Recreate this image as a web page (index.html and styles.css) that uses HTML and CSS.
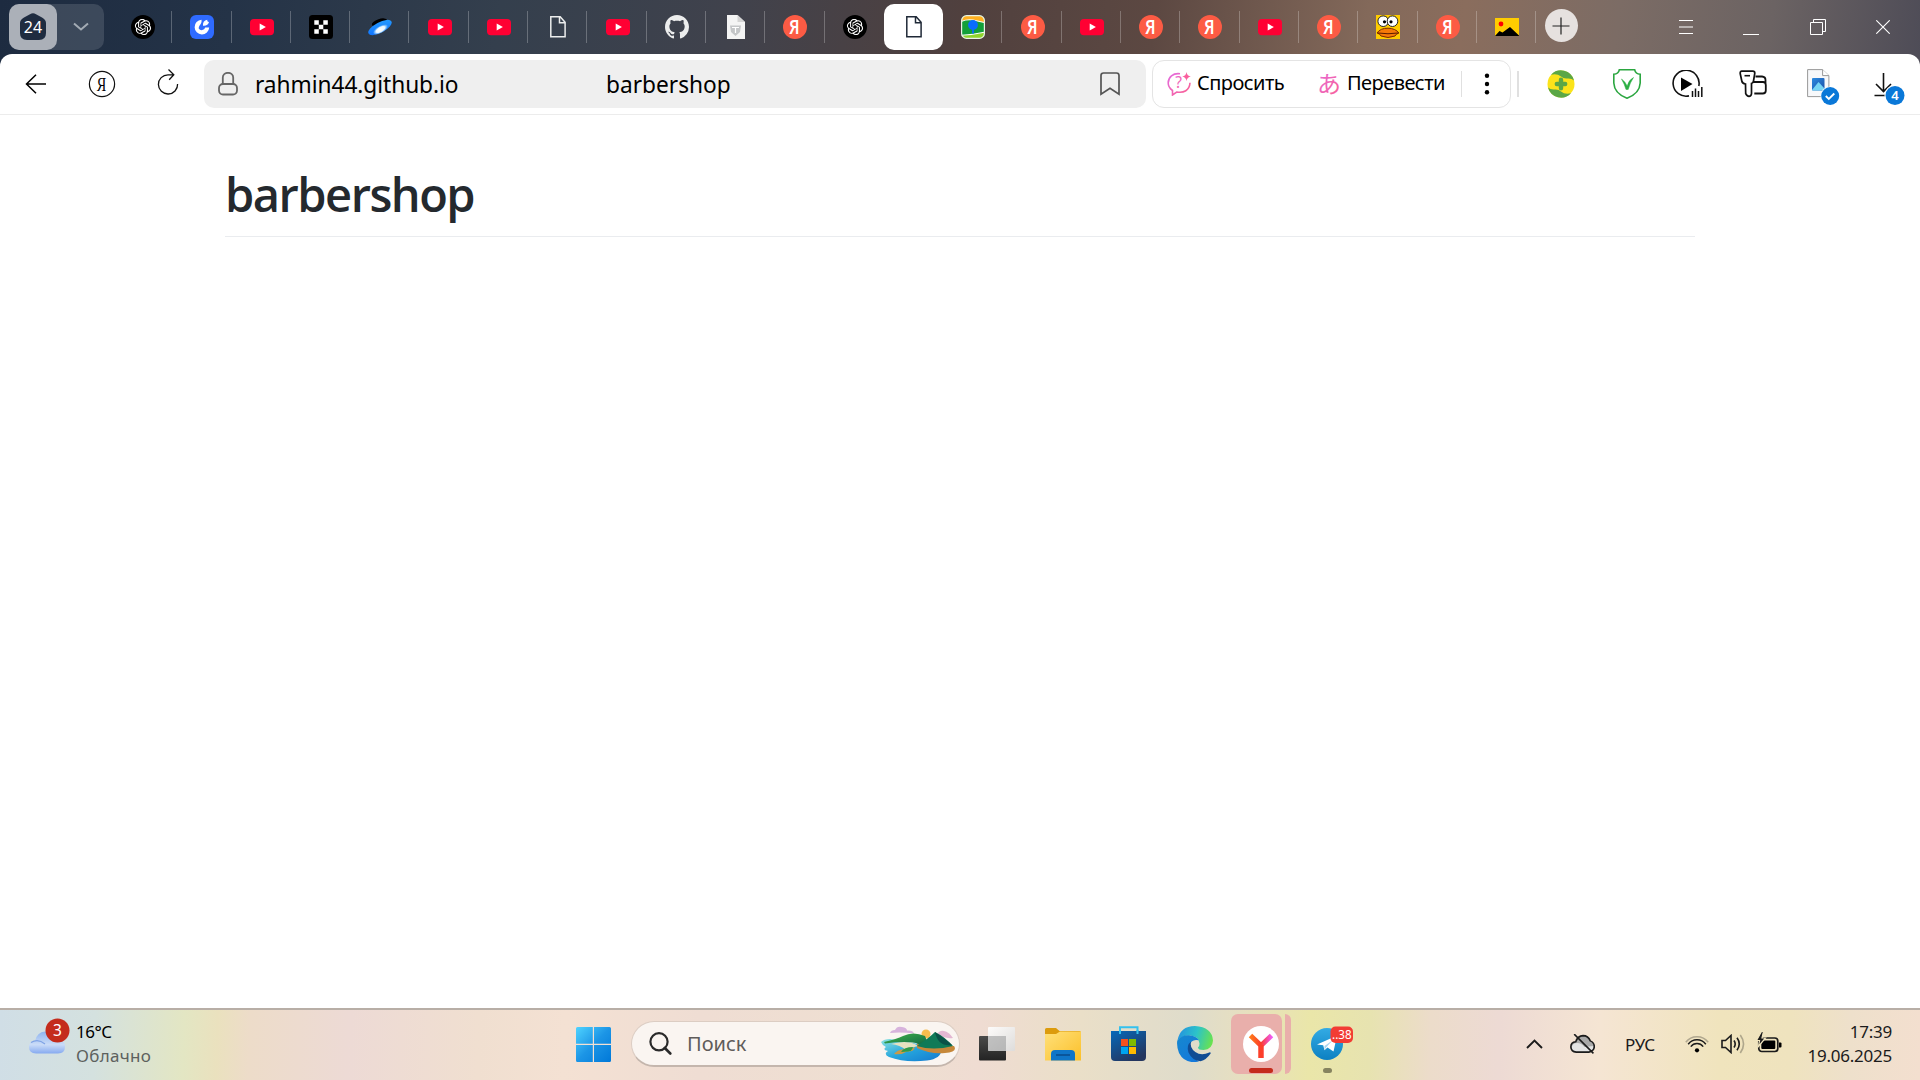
FILE: index.html
```html
<!DOCTYPE html>
<html lang="ru">
<head>
<meta charset="utf-8">
<title>barbershop</title>
<link rel="stylesheet" href="styles.css">
</head>
<body>
<svg class="defs" aria-hidden="true">
  <defs>
    <linearGradient id="pink" x1="0" y1="0" x2="1" y2="1"><stop offset="0" stop-color="#e36be0"/><stop offset="1" stop-color="#fb5f8f"/></linearGradient>
    <linearGradient id="saucer" x1="0" y1="1" x2="1" y2="0"><stop offset="0" stop-color="#0a6cff"/><stop offset="1" stop-color="#2aa2ff"/></linearGradient>
    <radialGradient id="glow"><stop offset="0" stop-color="#fff"/><stop offset=".6" stop-color="#e8f6ff"/><stop offset="1" stop-color="#7cc4ff" stop-opacity=".2"/></radialGradient>
    <linearGradient id="cloud" x1="0" y1="0" x2="0" y2="1"><stop offset="0" stop-color="#8fb4ee"/><stop offset=".6" stop-color="#cadcf8"/><stop offset="1" stop-color="#86aaf0"/></linearGradient>
    <linearGradient id="win" gradientUnits="userSpaceOnUse" x1="0" y1="0" x2="35" y2="35"><stop offset="0" stop-color="#4fd3ff"/><stop offset=".5" stop-color="#1c95e6"/><stop offset="1" stop-color="#0078d8"/></linearGradient>
    <linearGradient id="folder" x1="0" y1="0" x2="1" y2="1"><stop offset="0" stop-color="#ffe07a"/><stop offset="1" stop-color="#fbc02a"/></linearGradient>
    <linearGradient id="store" x1="0" y1="0" x2=".6" y2="1"><stop offset="0" stop-color="#0669ba"/><stop offset="1" stop-color="#24365f"/></linearGradient>
    <linearGradient id="edge-top" x1="0" y1=".4" x2="1" y2=".6"><stop offset="0" stop-color="#2493df"/><stop offset=".5" stop-color="#2cc3c9"/><stop offset="1" stop-color="#6be34c"/></linearGradient>
    <linearGradient id="edge-side" x1="0" y1="0" x2=".7" y2="1"><stop offset="0" stop-color="#1688cf"/><stop offset="1" stop-color="#1479db"/></linearGradient>
    <linearGradient id="ybranch" x1="0" y1="0" x2="1" y2="0"><stop offset="0" stop-color="#ff7a1a"/><stop offset=".5" stop-color="#fb3b2c"/><stop offset="1" stop-color="#f05af0"/></linearGradient>
    <linearGradient id="tg" x1="0" y1="0" x2="0" y2="1"><stop offset="0" stop-color="#33abe4"/><stop offset="1" stop-color="#0d80c2"/></linearGradient>
    <linearGradient id="pane" x1="0" y1="0" x2="1" y2="1"><stop offset="0" stop-color="#fff"/><stop offset="1" stop-color="#dcdcdc"/></linearGradient>
    <linearGradient id="dark" x1="0" y1="0" x2="0" y2="1"><stop offset="0" stop-color="#4b4b4a"/><stop offset="1" stop-color="#232323"/></linearGradient>
    <linearGradient id="sea" x1="0" y1="0" x2="1" y2="1"><stop offset="0" stop-color="#8fe3e0"/><stop offset=".5" stop-color="#25a5dd"/><stop offset="1" stop-color="#1479cf"/></linearGradient>
    <linearGradient id="hill" x1="0" y1="0" x2="1" y2="1"><stop offset="0" stop-color="#43b649"/><stop offset="1" stop-color="#0d6246"/></linearGradient>
    <linearGradient id="photo" x1="0" y1="0" x2="1" y2="1"><stop offset="0" stop-color="#2c8be0"/><stop offset="1" stop-color="#1b4fa8"/></linearGradient>
  </defs>
  <symbol id="i-gpt" viewBox="0 0 24 24"><circle cx="12" cy="12" r="12"/><path transform="translate(3.9 3.9) scale(.675)" fill="#fff" d="M22.2819 9.8211a5.9847 5.9847 0 0 0-.5157-4.9108 6.0462 6.0462 0 0 0-6.5098-2.9A6.0651 6.0651 0 0 0 4.9807 4.1818a5.9847 5.9847 0 0 0-3.9977 2.9 6.0462 6.0462 0 0 0 .7427 7.0966 5.98 5.98 0 0 0 .511 4.9107 6.051 6.051 0 0 0 6.5146 2.9001A5.9847 5.9847 0 0 0 13.2599 24a6.0557 6.0557 0 0 0 5.7718-4.2058 5.9894 5.9894 0 0 0 3.9977-2.9001 6.0557 6.0557 0 0 0-.7475-7.0729zm-9.022 12.6081a4.4755 4.4755 0 0 1-2.8764-1.0408l.1419-.0804 4.7783-2.7582a.7948.7948 0 0 0 .3927-.6813v-6.7369l2.02 1.1686a.071.071 0 0 1 .038.052v5.5826a4.504 4.504 0 0 1-4.4945 4.4944zm-9.6607-4.1254a4.4708 4.4708 0 0 1-.5346-3.0137l.142.0852 4.783 2.7582a.7712.7712 0 0 0 .7806 0l5.8428-3.3685v2.3324a.0804.0804 0 0 1-.0332.0615L9.74 19.9502a4.4992 4.4992 0 0 1-6.1408-1.6464zM2.3408 7.8956a4.485 4.485 0 0 1 2.3655-1.9728V11.6a.7664.7664 0 0 0 .3879.6765l5.8144 3.3543-2.0201 1.1685a.0757.0757 0 0 1-.071 0l-4.8303-2.7865A4.504 4.504 0 0 1 2.3408 7.872zm16.5963 3.8558L13.1038 8.364 15.1192 7.2a.0757.0757 0 0 1 .071 0l4.8303 2.7913a4.4944 4.4944 0 0 1-.6765 8.1042v-5.6772a.79.79 0 0 0-.407-.667zm2.0107-3.0231l-.142-.0852-4.7735-2.7818a.7759.7759 0 0 0-.7854 0L9.409 9.2297V6.8974a.0662.0662 0 0 1 .0284-.0615l4.8303-2.7866a4.4992 4.4992 0 0 1 6.6802 4.66zM8.3065 12.863l-2.02-1.1638a.0804.0804 0 0 1-.038-.0567V6.0742a4.4992 4.4992 0 0 1 7.3757-3.4537l-.142.0805L8.704 5.459a.7948.7948 0 0 0-.3927.6813zm1.0976-2.3654l2.602-1.4998 2.6069 1.4998v2.9994l-2.5974 1.4997-2.6067-1.4997Z"/></symbol>
  <symbol id="i-yt" viewBox="0 0 24 24"><rect y="4" width="24" height="16.2" rx="4" fill="#ff0033"/><path d="M9.7 8.6l6.2 3.5-6.2 3.5z" fill="#fff"/></symbol>
  <symbol id="i-ya" viewBox="0 0 24 24"><circle cx="12" cy="12" r="12" fill="#fc5b44"/><text x="11.2" y="18.6" text-anchor="middle" font-family="Noto Sans, sans-serif" font-weight="600" font-size="19" fill="#fff" textLength="10.6" lengthAdjust="spacingAndGlyphs">Я</text></symbol>
  <symbol id="i-doc" viewBox="0 0 24 24"><path d="M4.8 1.8h9.4l4.9 5.4v14.5H4.8zM13.5 1.8v5.9h5.6" fill="none" stroke="currentColor" stroke-width="1.5"/></symbol>
</svg>

<header class="tabstrip">
  <div class="group">
    <div class="group-count"><svg width="26" height="28" viewBox="0 0 26 28"><path d="M10 1.2 Q13-.6 16 1.2L22 4.4Q26 6.5 26 10V20Q26 27 19 27H7Q0 27 0 20V10Q0 6.5 4 4.4Z" fill="#1f2c40"/><text x="13" y="20" text-anchor="middle" font-family="Noto Sans, sans-serif" font-size="16" fill="#fff">24</text></svg></div>
    <svg class="group-more" width="18" height="10" viewBox="0 0 18 10"><path d="M2 1.5l7 6 7-6" fill="none" stroke="#a3abb4" stroke-width="2"/></svg>
  </div>
  <nav class="tabs">
    <span class="tab"><svg><use href="#i-gpt"/></svg></span>
    <span class="tab"><svg viewBox="0 0 24 24"><rect width="24" height="24" rx="6" fill="#2f6bff"/><path d="M11.5 4.8A7.3 7.3 0 1 0 19.2 12.5L15.2 12.5A3.6 3.6 0 0 1 8.7 13.5C8.8 9.8 12.2 9.5 11.5 4.8Z" fill="#fff"/><path d="M13 10.8C12.6 7.8 14 5.4 17.3 4.8c-.2 1.4.2 1.9 1.7 2.2-.5 2.6-2.8 4.2-6 3.8z" fill="#fff"/></svg></span>
    <span class="tab"><svg><use href="#i-yt"/></svg></span>
    <span class="tab"><svg viewBox="0 0 24 24"><rect width="24" height="24" rx="3.5"/><path d="M5.3 5.3h4.5v4.5h4.5v-4.5h4.5v4.5h-4.5v4.5h4.5v4.5h-4.5v-4.5h-4.5v4.5h-4.5v-4.5h4.5v-4.5h-4.5z" fill="#fff"/></svg></span>
    <span class="tab"><svg viewBox="0 0 24 24"><ellipse cx="11.5" cy="7.5" rx="8" ry="3.5" transform="rotate(-18 11.5 7.5)"/><ellipse cx="12" cy="12.5" rx="13" ry="5.2" transform="rotate(-28 12 12.5)" fill="url(#saucer)"/><ellipse cx="12.5" cy="14.5" rx="8.2" ry="3.6" transform="rotate(-30 12.5 14.5)" fill="url(#glow)"/></svg></span>
    <span class="tab"><svg><use href="#i-yt"/></svg></span>
    <span class="tab"><svg><use href="#i-yt"/></svg></span>
    <span class="tab pale"><svg><use href="#i-doc"/></svg></span>
    <span class="tab"><svg><use href="#i-yt"/></svg></span>
    <span class="tab pale"><svg viewBox="0 0 16 16"><path fill="currentColor" d="M8 0C3.58 0 0 3.58 0 8c0 3.54 2.29 6.53 5.47 7.59.4.07.55-.17.55-.38 0-.19-.01-.82-.01-1.49-2.01.37-2.53-.49-2.69-.94-.09-.23-.48-.94-.82-1.13-.28-.15-.68-.52-.01-.53.63-.01 1.08.58 1.23.82.72 1.21 1.87.87 2.33.66.07-.52.28-.87.51-1.07-1.78-.2-3.64-.89-3.64-3.95 0-.87.31-1.59.82-2.15-.08-.2-.36-1.02.08-2.12 0 0 .67-.21 2.2.82.64-.18 1.32-.27 2-.27s1.36.09 2 .27c1.53-1.04 2.2-.82 2.2-.82.44 1.1.16 1.92.08 2.12.51.56.82 1.27.82 2.15 0 3.07-1.87 3.75-3.65 3.95.29.25.54.73.54 1.48 0 1.07-.01 1.93-.01 2.2 0 .21.15.46.55.38A8.01 8.01 0 0 0 16 8c0-4.42-3.58-8-8-8z"/></svg></span>
    <span class="tab"><svg viewBox="0 0 24 24"><path d="M3 0h10.5L21 7v17H3z" fill="#f4f4f4"/><path d="M13.5 0v7H21z" fill="#d4d4d4"/><path d="M6 10.500h11l-1 6.500-4.500 4L7 17z" fill="#c4c6c8"/><path d="M8 12.5h7M11.5 13v5" stroke="#fff" stroke-width="1.2"/></svg></span>
    <span class="tab"><svg><use href="#i-ya"/></svg></span>
    <span class="tab last"><svg><use href="#i-gpt"/></svg></span>
    <span class="tab active"><svg><use href="#i-doc"/></svg></span>
    <span class="tab"><svg viewBox="0 0 24 24"><rect x=".5" y=".5" width="23" height="23" rx="5" fill="#12a03a"/><path d="M.8 6V5Q1 .8 5.500 .8h13Q23.200 1 23.200 5v2.500L12 5Q6 4 .8 6z" fill="#ffb020"/><path d="M.8 20.500Q12 20 23.200 17.500v2Q23 23.200 19 23.200H5Q1.500 23 .8 20.500z" fill="#8fd32b"/><path d="M.8 6.200Q6 4 12 5l11.200 2.500M.8 20.300Q12 19.800 23.200 17.300" fill="none" stroke="#fff" stroke-width="1.100"/><circle cx="12" cy="10" r="4.900" fill="#0a6cff"/><path d="M12 14v4.500" stroke="#0a6cff" stroke-width="1.800"/><rect x=".6" y=".6" width="22.800" height="22.800" rx="5" fill="none" stroke="#e9f2e6" stroke-width="1.200"/></svg></span>
    <span class="tab"><svg><use href="#i-ya"/></svg></span>
    <span class="tab"><svg><use href="#i-yt"/></svg></span>
    <span class="tab"><svg><use href="#i-ya"/></svg></span>
    <span class="tab"><svg><use href="#i-ya"/></svg></span>
    <span class="tab"><svg><use href="#i-yt"/></svg></span>
    <span class="tab"><svg><use href="#i-ya"/></svg></span>
    <span class="tab"><svg viewBox="0 0 24 24"><rect width="24" height="24" fill="#fc0"/><g fill="#fff" stroke="#222" stroke-width="1"><circle cx="7.200" cy="6.200" r="5.300"/><circle cx="16.500" cy="6.200" r="5.300"/></g><circle cx="8.500" cy="6.800" r="1.600"/><circle cx="15" cy="6.800" r="1.600"/><path d="M1 18Q4.500 13 12 13.200T23 18q-3 .8-4 3-7 3-14 0-1-2.200-4-3z" fill="#f67a08" stroke="#7a2c00" stroke-width="1"/><path d="M2 18q10 1.500 20 0" stroke="#5a1c00" fill="none"/></svg></span>
    <span class="tab"><svg><use href="#i-ya"/></svg></span>
    <span class="tab"><svg viewBox="0 0 24 24"><path d="M0 3h24v18H0z" fill="#fc0"/><circle cx="6" cy="9" r="2.400" fill="#f00"/><path d="M0 21l4.500-5 3 1.500L15 12l9 8.500v.5z"/></svg></span>
  </nav>
  <button class="newtab"><svg width="18" height="18" viewBox="0 0 18 18"><path d="M9 .5v17M.5 9h17" stroke="#222" stroke-width="1.200"/></svg></button>
  <div class="window">
    <svg width="14" height="14" viewBox="0 0 14 14"><path d="M0 .5h14M0 7h14M0 13.500h14" stroke="#fff"/></svg>
    <svg width="16" height="16" viewBox="0 0 16 16"><path d="M0 15.500h16" stroke="#fff"/></svg>
    <svg width="16" height="16" viewBox="0 0 16 16"><path d="M.5 3.500h12v12H.5zM3.500 3.500v-3h12v12h-3" fill="none" stroke="#fff"/></svg>
    <svg width="14" height="14" viewBox="0 0 14 14"><path d="M.3 .3l13.400 13.400M13.700 .3L.3 13.700" stroke="#fff" stroke-width="1.100"/></svg>
  </div>
</header>

<div class="toolbar">
  <div class="nav">
    <svg width="22" height="20" viewBox="0 0 22 20"><path d="M11 .8L1.500 10l9.500 9.200M1.500 10H21" fill="none" stroke="#000" stroke-width="1.500"/></svg>
    <svg width="28" height="28" viewBox="0 0 28 28"><circle cx="14" cy="14" r="12.600" fill="none" stroke="#111" stroke-width="1.200"/><text x="13.500" y="20.500" text-anchor="middle" font-family="Liberation Serif, serif" font-size="19.500" textLength="9.500" lengthAdjust="spacingAndGlyphs">Я</text></svg>
    <svg width="24" height="28" viewBox="0 0 24 28"><path d="M17.500 6.800H12A9.600 9.600 0 1 0 21.600 16M12.500 1.500l5.300 5.300-4.600 5" fill="none" stroke="#111" stroke-width="1.300"/></svg>
  </div>
  <div class="address">
    <svg width="20" height="24" viewBox="0 0 20 24"><rect x="1" y="12" width="18" height="10.500" rx="4" fill="none" stroke="#666" stroke-width="1.800"/><path d="M4.800 12V5.600a5.200 4.800 0 0 1 10.400 0V12" fill="none" stroke="#666" stroke-width="1.800"/></svg>
    <span class="host">rahmin44.github.io</span>
    <span class="title">barbershop</span>
    <svg width="20" height="24" viewBox="0 0 20 24"><path d="M1 22.200V3.500Q1 1 3.500 1h13Q19 1 19 3.500v18.700l-9-6z" fill="none" stroke="#555" stroke-width="1.700"/></svg>
  </div>
  <div class="assist">
    <svg width="24" height="24" viewBox="0 0 24 24"><path d="M13 1.800C6 .8 1.200 5.500 1.200 11c0 3.300 1.500 5.500 4.300 7.500V23l4.200-3c7 1.300 12.800-1.500 13.300-9.200" fill="none" stroke="url(#pink)" stroke-width="1.600"/><path d="M19.500 0q.6 4 4.300 4.500-3.700.6-4.300 4.500-.6-4-4.300-4.500Q19 4 19.500 0z" fill="#fa5f9e"/><text x="11.500" y="16.300" text-anchor="middle" font-family="Noto Sans, sans-serif" font-size="15.500" fill="url(#pink)">?</text></svg>
    <span class="ask">Спросить</span>
    <svg class="kana" width="22" height="24" viewBox="0 0 22 24"><text x="-1" y="20.500" font-family="Noto Sans CJK JP, sans-serif" font-size="24" fill="url(#pink)">あ</text></svg>
    <span class="translate">Перевести</span>
    <i class="line"></i>
    <svg class="dots" width="6" height="22" viewBox="0 0 6 22"><circle cx="3" cy="2.800" r="2.200"/><circle cx="3" cy="11" r="2.200"/><circle cx="3" cy="19.200" r="2.200"/></svg>
  </div>
  <i class="line outer"></i>
  <div class="extensions">
    <svg width="28" height="28" viewBox="0 0 28 28"><circle cx="14" cy="14" r="13.500" fill="#fbe31a"/><path d="M4 4.800A13.500 13.500 0 0 1 27 10.500Q24.500 8 20 8.500 16.500 8.800 14 6.500 10 3.300 4 4.800zM24 23.200A13.500 13.500 0 0 1 1 17.500Q3.500 20 8 19.500 11.500 19.200 14 21.500q4 3.200 10 1.700z" fill="#5ba746"/><path d="M14 9.800v8.400M9.800 14h8.400" stroke="#5ba746" stroke-width="4.400" stroke-linecap="round"/></svg>
    <svg width="28" height="30" viewBox="0 0 28 30"><path d="M6.300 .8h15.400Q22.500 4.800 27.200 5.200V14q-.5 10.500-13.200 15.200Q1.300 24.500.8 14V5.200Q5.500 4.800 6.300.8z" fill="none" stroke="#2ba640" stroke-width="1.600"/><path d="M8.500 10q3.800 2.500 5.700 7 1.500-6.200 6.300-8.500-3.500 5-5.300 12h-2.200Q11.500 15 8.500 10z" fill="#2bae43" stroke="#2bae43" stroke-width=".5"/></svg>
    <svg width="32" height="28" viewBox="0 0 32 28"><path d="M18 25.900A13 13 0 1 1 27.800 16" fill="none" stroke="#111" stroke-width="1.600"/><path d="M10 7.500l11.500 6.500L10 21z"/><path d="M21.500 27v-6M24.500 27V18.500M27.500 27v-6M30.800 27V17" stroke="#111" stroke-width="1.500"/></svg>
    <svg width="28" height="28" viewBox="0 0 28 28"><path d="M12.500 12H24q2.800 0 2.800 3v5.500q0 3-3 3h-8.500M16.500 6.500H23q3.500.3 3.500 3.500v4" fill="none" stroke="#111" stroke-width="1.800"/><path d="M2.800 1.200h11q2 0 2 2L14.500 11q-.3 2-2 2.500v10.200q-.3 2.600-2.500 2.600t-3.300-2.600L6.500 14Q3.300 13.500 2.800 11L1.200 3.500Q1 1.200 2.800 1.200z" fill="#fff" stroke="#111" stroke-width="1.700"/><path d="M5.500 5.700h5.500" stroke="#111" stroke-width="1.600"/></svg>
    <svg width="33" height="36" viewBox="0 0 33 36"><path d="M.6 .6h15l6.300 6v21H.6z" fill="#f7f8fa" stroke="#999" stroke-width="1"/><path d="M15.600 .6v6h6.300" fill="#fff" stroke="#999" stroke-width="1"/><rect x="5" y="9" width="12.500" height="12.500" rx="1" fill="url(#photo)"/><path d="M5 21l6.500-8 6 6.500v2H5z" fill="#76d5f5"/><circle cx="23.200" cy="27" r="9.600" fill="#fff"/><circle cx="23.200" cy="27" r="9" fill="#0a78d8"/><path d="M18.800 27l3 3 5.500-5.500" fill="none" stroke="#fff" stroke-width="1.900"/></svg>
    <svg width="32" height="34" viewBox="0 0 32 34"><path d="M9.500 1v18M2 12l7.500 7.500L17 12M.5 23.500H13" fill="none" stroke="#111" stroke-width="1.600"/><circle cx="21" cy="23.500" r="10.500" fill="#fff"/><circle cx="21" cy="23.500" r="9.500" fill="#0a78d8"/><text x="21" y="28.300" text-anchor="middle" font-family="Noto Sans, sans-serif" font-size="13" font-weight="600" fill="#fff">4</text></svg>
  </div>
</div>

<main class="page">
  <h1>barbershop</h1>
</main>

<footer class="taskbar">
  <div class="weather">
    <svg width="42" height="38" viewBox="0 0 42 38"><path d="M7 35.500q-7-.5-7-6.500 0-5.500 6-6Q8 14 16 13.500q8.500-.5 11.500 8.500 8.500-.5 8.500 6.500t-7 7z" fill="url(#cloud)"/><path d="M2 24.500q7-4.500 14 1.500" fill="none" stroke="#7fa3e6" stroke-width="1.200"/><circle cx="28.500" cy="12.500" r="12" fill="#c42b1c"/><text x="28.500" y="18" text-anchor="middle" font-family="Noto Sans, sans-serif" font-size="15.500" fill="#fff">3</text></svg>
    <div class="lines"><span class="temp">16°C</span><span class="sky">Облачно</span></div>
  </div>
  <svg class="start" width="35" height="35" viewBox="0 0 35 35"><path d="M0 1.500Q0 0 1.500 0H16.800v16.800H0zM18 0h15.500Q35 0 35 1.500V16.800H18zM0 18h16.800v17H1.500Q0 35 0 33.500zM18 18h17v15.500Q35 35 33.500 35H18z" fill="url(#win)"/></svg>
  <div class="search">
    <svg width="23" height="23" viewBox="0 0 23 23"><circle cx="10" cy="9.800" r="8.600" fill="none" stroke="#2a2a2a" stroke-width="2.200"/><path d="M15.800 16l5.500 5.500" stroke="#2a2a2a" stroke-width="2.600" stroke-linecap="round"/></svg>
    <span>Поиск</span>
    <svg width="74" height="36" viewBox="0 0 74 36"><circle cx="45" cy="8" r="4.500" fill="#f8bd4e"/><path d="M9 7q1-3 5-3 2-4.500 7-3 5 .5 5 3.500 6-.5 7 3Q20 6 9 7z" fill="#d7b3dc"/><path d="M56 9q2-5 7-4 5 1 9 7-8 1-16-3z" fill="#e3b7d2"/><path d="M0 16Q3 13 9 13L60 22Q62 32 46 34.500 24 37 8 31 2 28 7 25 1 24 5 21 1 19 0 16z" fill="url(#sea)"/><path d="M10 18q18-5 27 2-8 2-12 4-6-5-15-6z" fill="#e6e1c0"/><path d="M36 18l37 2q4 6-9 7-14 1.500-28-5z" fill="#c6883a"/><path d="M13 28q3-4 10-5 8 0 11-2-1 5-8 4.500-5 3.500-13 2.500z" fill="#c99a48"/><path d="M20 26q3-5 12-5-1 4-5 4.500z" fill="#2f9a48"/><path d="M3 16Q16 13 22 10q10-5 22 0l4 10q-9 0-13-3-12-2-31 .5z" fill="url(#hill)"/><path d="M36 20Q48 12 54 6q10 5 18 14-20 5-36 0z" fill="#0f7a57"/><path d="M54 6q8 5 17 13-14 2-17-13z" fill="#0a5147"/></svg>
  </div>
  <div class="apps">
    <svg width="36" height="36" viewBox="0 0 36 36"><rect y="10" width="27" height="24.500" rx="1" fill="url(#dark)"/><rect x="9" y="1" width="27" height="24" rx="1" fill="url(#pane)" fill-opacity=".9"/><path d="M9 10h18v15H9z" fill="#a2a2a2" fill-opacity=".55"/></svg>
    <svg width="36" height="36" viewBox="0 0 36 36"><path d="M0 10V3.500Q0 2 1.500 2H11l3.500 3H34.500Q36 5 36 6.500V12H0z" fill="#dc9b0d"/><path d="M0 8h11l4-2.500H36V34.500H0z" fill="url(#folder)"/><path d="M6 34.500V28q0-4 4-4h16q4 0 4 4v6.500z" fill="#0f75c8"/><path d="M11 29h14" stroke="#0a4b8c" stroke-width="1.500"/></svg>
    <svg width="36" height="36" viewBox="0 0 36 36"><path d="M9 7V1.200h17.500V7" fill="none" stroke="#34c1ee" stroke-width="2"/><path d="M0 5h35v26q0 4-4 4H4q-4 0-4-4z" fill="url(#store)"/><path d="M9 4v4M26.500 4v4" stroke="#34c1ee" stroke-width="2"/><path d="M10 13h7v7h-7z" fill="#f4511e"/><path d="M18 13h7v7h-7z" fill="#7fba00"/><path d="M10 21h7v7h-7z" fill="#00a4ef"/><path d="M18 21h7v7h-7z" fill="#ffb900"/></svg>
    <svg width="36" height="36" viewBox="0 0 36 36"><path d="M.3 15Q3 0 18 0q17 1 18 14.500-.5 9-9.500 9.500-5.500 0-5.500-2.500 1.500-1 1.500-4-.5-7-9-8Q5 9 .3 15z" fill="url(#edge-top)"/><path d="M.2 15Q4 9 12 9.300q7 .4 10 5-8-2-9.500 6Q12 30 22 35.500 8 38.500 2 27q-2.500-6-1.800-12z" fill="url(#edge-side)"/><path d="M14 15.500q-5 4-2.500 11 3.500 8 12 8.700 6-1.500 10.300-8-.3-1.200-1.500-.7-8 3.800-14-.5-6-4.500-4.300-10.500z" fill="#104c94"/></svg>
    <div class="stack">
      <div class="tile"><svg width="36" height="36" viewBox="0 0 36 36"><circle cx="18" cy="18" r="18" fill="#fff"/><path d="M7.500 9.500l10.500 10 10.500-10M18 18v14" fill="none" stroke="url(#ybranch)" stroke-width="5"/><path d="M18 19v13" stroke="#fc3f2a" stroke-width="5"/></svg><i></i></div>
      <div class="behind"></div>
    </div>
    <svg class="telegram" width="44" height="52" viewBox="0 0 44 52"><circle cx="16" cy="20" r="16" fill="url(#tg)"/><path d="M6 20.500L24 12.500q2-.5 1.500 1.500L22.500 27.500l-6-4-3 2.800-1.300-5z" fill="#fff"/><path d="M13.500 22l8.500-6-7 7.500-1.500 2.800z" fill="#a9d5ef"/><rect x="19.500" y="2.500" width="22.500" height="16.500" rx="5" fill="#f23c34"/><text x="30.800" y="15.200" text-anchor="middle" font-family="Noto Sans, sans-serif" font-size="12" fill="#fff" textLength="19.500" lengthAdjust="spacingAndGlyphs">..38</text><rect x="12" y="44" width="9" height="5" rx="2.500" fill="#86835f"/></svg>
  </div>
  <div class="tray">
    <svg width="17" height="10" viewBox="0 0 17 10"><path d="M1 9l7.500-7.500L16 9" fill="none" stroke="#1b1b1b" stroke-width="1.900"/></svg>
    <svg class="onedrive" width="25" height="21" viewBox="0 0 24 20"><path d="M6 17.300q-5-.3-5.200-5 0-4.500 4.700-5Q7.500 1.800 12.500 1.500q5 0 7 5Q23.300 8 23.300 12t-4.800 5.300z" fill="#a9a9a9"/><path d="M1.500 13.500Q2 8.500 7 8.500q4 0 7 4l8.500-1q.5 5-4 5.500H6q-4-.5-4.500-3.500z" fill="#e4e4e4"/><path d="M6 17.300q-5-.3-5.200-5 0-4.500 4.700-5Q7.500 1.800 12.500 1.500q5 0 7 5Q23.300 8 23.300 12t-4.800 5.300zM4 0l18.500 18.500" fill="none" stroke="#1b1b1b" stroke-width="1.500"/></svg>
    <span class="lang">РУС</span>
    <svg class="wifi" width="24" height="18" viewBox="0 0 24 18"><circle cx="12" cy="15.300" r="2.100"/><g fill="none" stroke="#1b1b1b" stroke-width="1.500"><path d="M.8 7.300a14 14 0 0 1 22.400 0" stroke-opacity=".3"/><path d="M3.200 9.200a11 11 0 0 1 17.600 0M5.800 11.600a7.800 7.800 0 0 1 12.400 0"/></g></svg>
    <svg class="sound" width="24" height="20" viewBox="0 0 24 20"><g fill="none" stroke="#1b1b1b" stroke-width="1.600"><path d="M1 6.500h3.500L10 1.500v17L4.500 13.500H1zM13 6.500q2.400 3.500 0 7M16 3.800q4.500 6.200 0 12.400"/><path d="M19.300 1q6.500 9 0 18" stroke-opacity=".3"/></g></svg>
    <svg class="battery" width="25" height="20" viewBox="0 0 25 20"><rect x="1.800" y="4" width="19" height="13.500" rx="3" fill="none" stroke="#1b1b1b" stroke-width="1.700"/><rect x="4.300" y="6.600" width="14" height="8.300" rx="1"/><path d="M22 8.500h1.500q1 0 1 1v3q0 1-1 1H22z"/><path d="M4.500-2.500L-.5 6.500h3L1.500 12.500 8.500 4H5L6.500-2.500z" fill="#1b1b1b" stroke="#f2e6bf" stroke-width="1.200"/></svg>
    <div class="clock"><span class="time">17:39</span><span class="date">19.06.2025</span></div>
  </div>
</footer>
</body>
</html>
```
FILE: styles.css
```css
* { box-sizing: border-box; }
html, body { height: 100%; }
body {
  margin: 0;
  display: flex;
  flex-direction: column;
  overflow: hidden;
  background: #fff;
  font-family: "Noto Sans", sans-serif;
  color: #000;
}
.defs { position: absolute; width: 0; height: 0; }
svg { display: block; flex: none; }
span { white-space: nowrap; }

/* Tab strip */
.tabstrip {
  flex: none;
  display: flex;
  height: 66px;
  margin-bottom: -12px;
  padding: 4px 0 0 9px;
  background: linear-gradient(98deg, #1d2b40 0, #243347 12%, #343f4d 26%, #40424c 38%, #50403e 50%, #5c4842 60%, #83695a 71%, #8a6d5d 76%, #7c6c65 84%, #6b6363 92%, #4e4c57 100%);
}
.group {
  display: flex;
  align-items: center;
  width: 95px;
  height: 46px;
  border-radius: 10px;
  background: rgba(255, 255, 255, .13);
}
.group-count {
  display: grid;
  place-items: center;
  width: 48px;
  height: 46px;
  border-radius: 10px;
  background: #abb0b8;
}
.group-count svg { overflow: visible; }
.group-more { margin-left: 15px; }
.tabs { display: flex; margin-left: 9px; height: 46px; }
.tab {
  display: grid;
  place-items: center;
  width: 59.3px;
  height: 46px;
  padding-left: 2px;
  border-right: 1.5px solid transparent;
  border-image: linear-gradient(transparent 8px, rgba(255,255,255,.25) 8px, rgba(255,255,255,.25) 38px, transparent 38px) 1;
}
.tab svg { width: 24px; height: 24px; }
.tab.last { border-image: none; }
.tab.active {
  padding: 0;
  border: 0;
  border-image: none;
  border-radius: 10px;
  background: #fff;
  color: #1f2937;
}
.pale { color: #eceded; }
.newtab {
  display: grid;
  place-items: center;
  width: 33px;
  height: 33px;
  margin: 5px 0 0 8.5px;
  padding: 0;
  border: 0;
  border-radius: 50%;
  background: #e6e1df;
}
.window {
  display: flex;
  gap: 50.5px;
  height: 46px;
  align-items: center;
  margin-left: 101px;
}

/* Toolbar */
.toolbar {
  flex: none;
  display: flex;
  height: 61px;
  padding-top: 6px;
  border-bottom: 1px solid #ececec;
  border-radius: 12px 12px 0 0;
  background: #fff;
}
.nav {
  display: flex;
  align-items: center;
  gap: 40.5px;
  width: 204px;
  height: 48px;
  padding-left: 25px;
}
.nav svg:last-child { margin-top: -4px; }
.address {
  display: flex;
  align-items: center;
  width: 942px;
  height: 48px;
  padding: 0 26px 0 14px;
  border-radius: 10px;
  background: #efefef;
  font-size: 22.7px;
}
.host { width: 351px; margin-left: 17px; letter-spacing: -.05px; }
.title { flex: 1; letter-spacing: 0; }
.assist {
  display: flex;
  align-items: center;
  width: 359px;
  height: 48px;
  margin-left: 6px;
  padding-left: 14px;
  border: 1px solid #e4e4e4;
  border-radius: 12px;
  font-size: 20px;
}
.kana { overflow: visible; }
.ask { width: 121px; margin: -3px 0 0 6px; letter-spacing: -.55px; }
.translate { width: 114px; margin: -3px 0 0 7px; letter-spacing: -.55px; }
.line { width: 1px; height: 26px; background: #e0e0e0; }
.dots { margin-left: 22px; }
.line.outer { margin: 11px 0 0 6px; width: 2px; }
.extensions {
  display: flex;
  align-items: center;
  height: 48px;
  margin-left: 28px;
  gap: 37.5px;
}
.extensions svg:nth-child(3) { margin-left: -7px; }
.extensions svg:nth-child(4) { margin-left: -2px; }
.extensions svg:nth-child(5) { margin: 6px 0 0 3px; }
.extensions svg:nth-child(6) { margin: 9px 0 0 -4px; }

/* Page */
.page { flex: 1; padding: 54px 225px 0; }
h1 {
  margin: 0;
  height: 68px;
  border-bottom: 1px solid #eaecef;
  color: #24292e;
  font: 600 47px/50px "Open Sans", sans-serif;
  letter-spacing: -1.5px;
}

/* Taskbar */
.taskbar {
  flex: none;
  display: flex;
  align-items: center;
  height: 72px;
  padding-bottom: 2px;
  border-top: 2px solid #b8aea6;
  background: linear-gradient(92deg, #d0dee6 0, #d4e1df 95px, #e3e6c3 185px, #eae1be 218px, #eddcc9 250px, #eddad5 350px, #f0dfd0 480px, #f4e1d3 565px, #efddd3 700px, #eedfd1 900px, #efdcd2 980px, #eadfc8 1080px, #dfdccb 1190px, #e6dfc1 1240px, #eae6a9 1310px, #e7e3b0 1370px, #ecdcca 1430px, #eddad4 1500px, #f5e5d3 1600px, #f0e4bd 1720px, #efe3be 1790px, #eee0cb 1850px, #f3dfcf 1920px);
}
.weather { display: flex; width: 576px; padding-left: 29px; }
.weather svg { margin-top: -3px; }
.lines { display: flex; flex-direction: column; margin: -1px 0 0 5px; font-size: 17px; line-height: 24px; }
.temp { letter-spacing: -.5px; }
.sky { color: #5d615e; letter-spacing: .3px; }
.search {
  display: flex;
  align-items: center;
  width: 329px;
  height: 46px;
  margin-left: 20px;
  padding: 0 4px 0 17px;
  border: 1px solid #dccdc3;
  border-bottom: 2px solid #c4b6ad;
  border-radius: 23px;
  background: #faf5f1;
  font-size: 20px;
  color: #5f5c5a;
}
.search span { flex: 1; margin-left: 15px; }
.apps { display: flex; align-items: center; gap: 30px; margin-left: 19px; }
.stack { display: flex; gap: 3px; margin-left: -12px; width: 60px; }
.tile {
  display: flex;
  flex-direction: column;
  align-items: center;
  width: 51px;
  height: 60px;
  padding: 12px 0 0 9px;
  border-radius: 7px;
  background: #e9afab;
}
.tile i { width: 24px; height: 5px; margin: 6px 0 0; border-radius: 3px; background: #c42b1c; }
.behind { width: 6px; border-radius: 0 7px 7px 0; background: #e9afab; }
.telegram { margin: 12px 0 0 -10px; }
.tray { display: flex; align-items: center; margin-left: 171px; font-size: 17px; color: #1b1b1b; }
.onedrive { margin-left: 27px; }
.lang { width: 33px; margin: 0 0 0 30px; letter-spacing: -.2px; }
.wifi { margin-left: 27px; }
.sound { margin-left: 12px; }
.battery { margin-left: 12px; overflow: visible; }
.clock { display: flex; flex-direction: column; align-items: flex-end; width: 110px; margin-top: -1px; line-height: 24px; }
.time, .date { letter-spacing: -.25px; }
```
